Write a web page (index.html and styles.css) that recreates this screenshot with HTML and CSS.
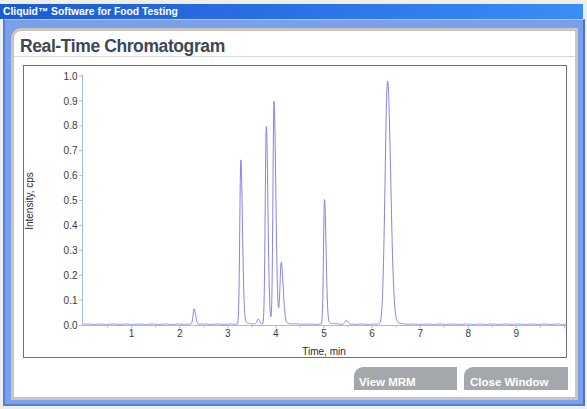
FILE: index.html
```html
<!DOCTYPE html>
<html>
<head>
<meta charset="utf-8">
<title>Real-Time Chromatogram</title>
<link rel="stylesheet" href="styles.css">
</head>
<body>
<div class="window">
  <div class="titlebar">Cliquid™ Software for Food Testing</div>
  <div class="frame">
    <div class="panel">
      <h1 class="panel-title">Real-Time Chromatogram</h1>
      <div class="chart-box">
        <svg class="chart" width="542" height="291" viewBox="24 66 542 291">
          <g class="axis">
            <line x1="82.5" y1="74" x2="82.5" y2="325.5"/>
            <line x1="82.5" y1="325.5" x2="566" y2="325.5"/>
            <line x1="79" y1="76" x2="82.5" y2="76"/>
            <line x1="79" y1="100.9" x2="82.5" y2="100.9"/>
            <line x1="79" y1="125.8" x2="82.5" y2="125.8"/>
            <line x1="79" y1="150.7" x2="82.5" y2="150.7"/>
            <line x1="79" y1="175.6" x2="82.5" y2="175.6"/>
            <line x1="79" y1="200.5" x2="82.5" y2="200.5"/>
            <line x1="79" y1="225.4" x2="82.5" y2="225.4"/>
            <line x1="79" y1="250.3" x2="82.5" y2="250.3"/>
            <line x1="79" y1="275.2" x2="82.5" y2="275.2"/>
            <line x1="79" y1="300.1" x2="82.5" y2="300.1"/>
            <line x1="79" y1="325.5" x2="82.5" y2="325.5"/>
            <line x1="107.5" y1="325.5" x2="107.5" y2="327.5"/>
            <line x1="131.6" y1="325.5" x2="131.6" y2="328.5"/>
            <line x1="155.6" y1="325.5" x2="155.6" y2="327.5"/>
            <line x1="179.7" y1="325.5" x2="179.7" y2="328.5"/>
            <line x1="203.7" y1="325.5" x2="203.7" y2="327.5"/>
            <line x1="227.8" y1="325.5" x2="227.8" y2="328.5"/>
            <line x1="251.8" y1="325.5" x2="251.8" y2="327.5"/>
            <line x1="275.9" y1="325.5" x2="275.9" y2="328.5"/>
            <line x1="299.9" y1="325.5" x2="299.9" y2="327.5"/>
            <line x1="324.0" y1="325.5" x2="324.0" y2="328.5"/>
            <line x1="348.0" y1="325.5" x2="348.0" y2="327.5"/>
            <line x1="372.1" y1="325.5" x2="372.1" y2="328.5"/>
            <line x1="396.1" y1="325.5" x2="396.1" y2="327.5"/>
            <line x1="420.2" y1="325.5" x2="420.2" y2="328.5"/>
            <line x1="444.2" y1="325.5" x2="444.2" y2="327.5"/>
            <line x1="468.3" y1="325.5" x2="468.3" y2="328.5"/>
            <line x1="492.3" y1="325.5" x2="492.3" y2="327.5"/>
            <line x1="516.4" y1="325.5" x2="516.4" y2="328.5"/>
            <line x1="540.4" y1="325.5" x2="540.4" y2="327.5"/>
            <line x1="564.5" y1="325.5" x2="564.5" y2="328.5"/>
          </g>
          <g class="ylabels">
            <text x="77.5" y="79.6">1.0</text>
            <text x="77.5" y="104.5">0.9</text>
            <text x="77.5" y="129.4">0.8</text>
            <text x="77.5" y="154.3">0.7</text>
            <text x="77.5" y="179.2">0.6</text>
            <text x="77.5" y="204.1">0.5</text>
            <text x="77.5" y="229.0">0.4</text>
            <text x="77.5" y="253.9">0.3</text>
            <text x="77.5" y="278.8">0.2</text>
            <text x="77.5" y="303.7">0.1</text>
            <text x="77.5" y="328.6">0.0</text>
          </g>
          <g class="xlabels">
            <text x="131.6" y="337">1</text>
            <text x="179.7" y="337">2</text>
            <text x="227.8" y="337">3</text>
            <text x="275.9" y="337">4</text>
            <text x="324.0" y="337">5</text>
            <text x="372.1" y="337">6</text>
            <text x="420.2" y="337">7</text>
            <text x="468.3" y="337">8</text>
            <text x="516.4" y="337">9</text>
          </g>
          <text class="axis-title" x="324" y="355">Time, min</text>
          <text class="axis-title" x="0" y="0" transform="translate(33 201) rotate(-90)">Intensity, cps</text>
          <path id="trace" class="trace" d="M83.5,324 L566,324"/>
        </svg>
      </div>
      <div class="actions">
        <button class="tab-btn btn-mrm" type="button">View MRM</button>
        <button class="tab-btn btn-close" type="button">Close Window</button>
      </div>
    </div>
  </div>
</div>
<script src="script.js"></script>
</body>
</html>
```

FILE: styles.css
```css
html, body {
  margin: 0;
  padding: 0;
}

body {
  width: 587px;
  height: 409px;
  overflow: hidden;
  background: #e6e6e6;
  font-family: "Liberation Sans", Arial, sans-serif;
}

.window {
  padding-top: 4px;
  background: #eeeeee;
  height: 405px;
}

.titlebar {
  height: 15px;
  line-height: 15px;
  margin-right: 4px;
  padding-left: 3px;
  background: linear-gradient(90deg, #1b5bd3 0%, #2a71e6 50%, #3b8df7 100%);
  color: #ffffff;
  font-weight: bold;
  font-size: 10.3px;
  white-space: nowrap;
}

.frame {
  margin: 0 2px 0 3px;
  border-left: 2px solid #4f7fdf;
  border-right: 2px solid #4a74d4;
  border-top: 1px solid #a9c7f5;
  border-bottom: 2px solid #4f7fdf;
  background: #7b9fe9;
  padding: 8px 5px 4px 6px;
}

.panel {
  box-sizing: border-box;
  width: 567px;
  height: 372px;
  background: #ffffff;
  border: 3px solid #cac6be;
  border-top-left-radius: 10px;
  display: flex;
  flex-direction: column;
}

.panel-title {
  margin: 0;
  padding: 5px 0 0 6px;
  height: 20px;
  line-height: 20px;
  font-size: 17.5px;
  letter-spacing: -0.4px;
  font-weight: bold;
  color: #3b4858;
  border-bottom: 1px solid #d9d9d9;
}

.chart-box {
  box-sizing: border-box;
  margin: 8px 8px 0 9px;
  height: 293px;
  border: 1px solid #6a7077;
  background: #ffffff;
}

.chart {
  display: block;
}

.axis line {
  stroke: #a3bfd9;
  stroke-width: 1;
}

.ylabels text {
  font-family: "Liberation Sans", Arial, sans-serif;
  font-size: 10px;
  fill: #3a3a3a;
  text-anchor: end;
}

.xlabels text {
  font-family: "Liberation Sans", Arial, sans-serif;
  font-size: 10px;
  fill: #3a3a3a;
  text-anchor: middle;
}

.axis-title {
  font-family: "Liberation Sans", Arial, sans-serif;
  font-size: 10px;
  fill: #2a2a2a;
  text-anchor: middle;
}

.trace {
  fill: none;
  stroke: #8585e6;
  stroke-width: 1;
  stroke-linejoin: round;
}

.actions {
  display: flex;
  justify-content: flex-end;
  gap: 7px;
  margin-top: 9px;
  padding-right: 7px;
}

.tab-btn {
  box-sizing: border-box;
  height: 23px;
  border: 0;
  margin: 0;
  padding: 7px 0 0 5px;
  background: #a4a8ad;
  color: #ffffff;
  font-family: "Liberation Sans", Arial, sans-serif;
  font-weight: bold;
  font-size: 11.5px;
  line-height: 14px;
  text-align: left;
  border-top-left-radius: 9px;
  cursor: pointer;
}

.btn-mrm {
  width: 103px;
}

.btn-close {
  width: 104px;
  padding-left: 6px;
}
```

FILE: script.js
```js
(function () {
  var peaks = [
    [2.30, 0.062, 0.022, 0.030],
    [3.27, 0.660, 0.021, 0.034],
    [3.63, 0.020, 0.020, 0.030],
    [3.80, 0.795, 0.022, 0.033],
    [3.96, 0.890, 0.021, 0.037],
    [4.11, 0.240, 0.025, 0.040],
    [5.01, 0.500, 0.020, 0.032],
    [5.46, 0.015, 0.025, 0.030],
    [6.32, 0.975, 0.050, 0.065]
  ];
  function f(t) {
    var s = 0.003 + 0.0007 * Math.sin(t * 23.1) + 0.0005 * Math.sin(t * 61.7 + 1.3);
    for (var i = 0; i < peaks.length; i++) {
      var p = peaks[i], d = t - p[0], sg = d < 0 ? p[2] : p[3];
      s += p[1] * Math.exp(-0.5 * d * d / (sg * sg));
      if (d > 0) s += p[1] * 0.025 * Math.exp(-d / 0.12) * (1 - Math.exp(-d / 0.03));
    }
    return s;
  }
  var pts = [];
  for (var x = 83.5; x <= 566; x += 0.25) {
    var t = (x - 83.5) / 48.1;
    var y = 325 - f(t) * 249;
    pts.push(x.toFixed(2) + ',' + y.toFixed(2));
  }
  document.getElementById('trace').setAttribute('d', 'M' + pts.join('L'));
})();
```
